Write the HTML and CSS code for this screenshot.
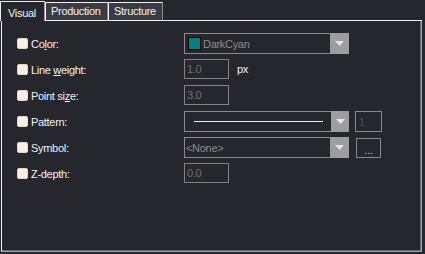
FILE: index.html
```html
<!DOCTYPE html>
<html>
<head>
<meta charset="utf-8">
<link rel="stylesheet" href="styles.css">
</head>
<body>
<div class="window">
  <div class="tabs">
    <div class="tab active">Visual</div>
    <div class="tab prod">Production</div>
    <div class="tab struct">Structure</div>
    <div class="tab-fill"></div>
  </div>
  <div class="panel">
    <div class="row">
      <div class="lbl"><span class="chk"></span><span>Co<u>l</u>or:</span></div>
      <div class="combo"><span class="swatch"></span><span class="ctext">DarkCyan</span><span class="drop"><svg width="9" height="5" viewBox="0 0 9 5"><polygon points="0,0 9,0 4.5,5" fill="#e8e8e8"/></svg></span></div>
    </div>
    <div class="row">
      <div class="lbl"><span class="chk"></span><span>Line <u>w</u>eight:</span></div>
      <div class="tbox">1.0</div>
      <span class="unit">px</span>
    </div>
    <div class="row">
      <div class="lbl"><span class="chk"></span><span>Point si<u>z</u>e:</span></div>
      <div class="tbox">3.0</div>
    </div>
    <div class="row">
      <div class="lbl"><span class="chk"></span><span>Pattern:</span></div>
      <div class="combo"><span class="pline"></span><span class="drop"><svg width="9" height="5" viewBox="0 0 9 5"><polygon points="0,0 9,0 4.5,5" fill="#e8e8e8"/></svg></span></div>
      <div class="numbox">1</div>
    </div>
    <div class="row">
      <div class="lbl"><span class="chk"></span><span>Symbol:</span></div>
      <div class="combo"><span class="ctext none">&lt;None&gt;</span><span class="drop"><svg width="9" height="5" viewBox="0 0 9 5"><polygon points="0,0 9,0 4.5,5" fill="#e8e8e8"/></svg></span></div>
      <div class="dots">...</div>
    </div>
    <div class="row">
      <div class="lbl"><span class="chk"></span><span>Z-depth:</span></div>
      <div class="tbox">0.0</div>
    </div>
  </div>
</div>
</body>
</html>
```

FILE: styles.css
```css
html, body {
  margin: 0;
  padding: 0;
  background: #26272c;
}
body {
  width: 425px;
  height: 254px;
  overflow: hidden;
  font-family: "Liberation Sans", Arial, sans-serif;
  font-size: 11px;
  letter-spacing: -0.3px;
  color: #f2f2f2;
}
.window {
  margin-left: 1px;
  width: 421px;
}
.tabs {
  display: flex;
  height: 21px;
  align-items: flex-start;
}
.tab {
  box-sizing: border-box;
  margin-top: 2px;
  height: 19px;
  background: #3b3c43;
  border-top: 1px solid #f0f0f0;
  border-left: 1px solid #f0f0f0;
  border-right: 1px solid #8c8c8c;
  border-bottom: 1px solid #f0f0f0;
  padding: 2px 0 0 5px;
  line-height: 13px;
}
.tab.prod { width: 63px; }
.tab.struct { width: 55px; }
.tab.active {
  margin-left: -1px;
  margin-top: 1px;
  width: 45px;
  height: 20px;
  background: #26272c;
  border-bottom: none;
  border-right: 1px solid #a0a0a0;
  padding: 5px 0 0 7px;
}
.tab-fill {
  flex: 1;
  height: 21px;
  box-sizing: border-box;
  border-bottom: 1px solid #f0f0f0;
}
.panel {
  box-sizing: border-box;
  height: 231px;
  border-left: 1px solid #f0f0f0;
  border-right: 1px solid #a0a0a0;
  border-bottom: 1px solid #a0a0a0;
  box-shadow: inset -1px -1px 0 #6a6a6a;
  padding: 12px 0 0 15px;
}
.row {
  display: flex;
  align-items: flex-start;
  height: 26px;
}
.lbl {
  display: flex;
  align-items: center;
  width: 167px;
  height: 21px;
}
.lbl u {
  text-decoration-thickness: 1px;
  text-underline-offset: 1px;
}
.chk {
  box-sizing: border-box;
  width: 11px;
  height: 11px;
  background: #fcf0e4;
  border: 1px solid #e6d9cc;
  border-radius: 2px;
  margin-right: 3px;
}
.combo {
  box-sizing: border-box;
  display: flex;
  align-items: center;
  width: 165px;
  height: 21px;
  border: 1px solid #8a8a8a;
}
.swatch {
  box-sizing: border-box;
  width: 13px;
  height: 13px;
  margin-left: 3px;
  background: #008080;
  border: 1px solid #000;
}
.ctext {
  flex: 1;
  margin-left: 2px;
  color: #8c8c8c;
}
.ctext.none {
  margin-left: 1px;
}
.pline {
  flex: none;
  width: 129px;
  height: 1px;
  margin-left: 9px;
  margin-right: 8px;
  background: #f0f0f0;
}
.drop {
  display: flex;
  align-items: center;
  justify-content: center;
  align-self: stretch;
  width: 19px;
  margin: -1px -1px -1px auto;
  background: #9d9d9f;
}
.tbox {
  box-sizing: border-box;
  width: 45px;
  height: 20px;
  border: 1px solid #838383;
  padding: 2px 0 0 2px;
  line-height: 14px;
  color: #707070;
}
.unit {
  margin-left: 8px;
  line-height: 20px;
}
.numbox {
  box-sizing: border-box;
  width: 27px;
  height: 21px;
  margin-left: 6px;
  border: 1px solid #8a8a8a;
  padding: 3px 0 0 3px;
  line-height: 14px;
  color: #4c4c5c;
}
.dots {
  box-sizing: border-box;
  width: 25px;
  height: 20px;
  margin-left: 7px;
  margin-top: 1px;
  border: 1px solid #8a8a8a;
  text-align: center;
  line-height: 22px;
  color: #c8c8c8;
  letter-spacing: 0;
}
```
